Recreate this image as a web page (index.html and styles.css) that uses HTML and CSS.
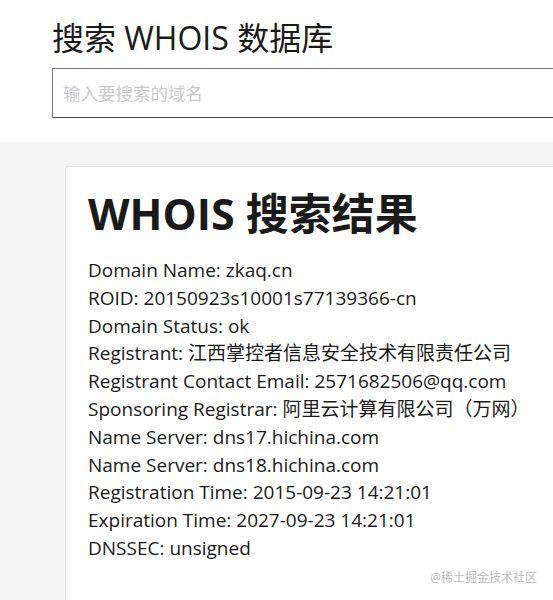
FILE: index.html
```html
<!DOCTYPE html>
<html lang="zh-CN">
<head>
  <meta charset="UTF-8">
  <meta name="viewport" content="width=device-width, initial-scale=1.0">
  <title>WHOIS</title>
  <link rel="stylesheet" href="styles.css">
</head>
<body>
  <div class="top">
    <h1 class="title">搜索 WHOIS 数据库</h1>
    <input class="search" type="text" placeholder="输入要搜索的域名">
  </div>
  <div class="main">
    <div class="card">
      <h2 class="cardTitle">WHOIS 搜索结果</h2>
      <div class="info">
        <div class="row">Domain Name: zkaq.cn</div>
        <div class="row">ROID: 20150923s10001s77139366-cn</div>
        <div class="row">Domain Status: ok</div>
        <div class="row">Registrant: 江西掌控者信息安全技术有限责任公司</div>
        <div class="row">Registrant Contact Email: 2571682506@qq.com</div>
        <div class="row">Sponsoring Registrar: 阿里云计算有限公司（万网）</div>
        <div class="row">Name Server: dns17.hichina.com</div>
        <div class="row">Name Server: dns18.hichina.com</div>
        <div class="row">Registration Time: 2015-09-23 14:21:01</div>
        <div class="row">Expiration Time: 2027-09-23 14:21:01</div>
        <div class="row">DNSSEC: unsigned</div>
      </div>
    </div>
  </div>
  <div class="mark">@稀土掘金技术社区</div>
</body>
</html>
```

FILE: styles.css
```css
html, body{
  margin: 0;
  height: 100%;
  overflow: hidden;
}
body{
  font-family: "Open Sans", "Noto Sans CJK SC", sans-serif;
  color: #1a1a1a;
  background: #f5f5f5;
}
.top{
  background: #fff;
  padding: 19px 0 24px 52px;
}
.title{
  margin: 0 0 11px;
  font-size: 32px;
  line-height: 38px;
  font-weight: 400;
}
.search{
  display: block;
  box-sizing: border-box;
  width: 560px;
  height: 50px;
  padding: 0 10px;
  border: 1px solid #7a7a7a;
  border-bottom-color: #444;
  border-right: none;
  border-radius: 0;
  font-family: "Open Sans", "Noto Sans CJK SC", sans-serif;
  font-size: 17.5px;
  outline: none;
}
.search::placeholder{
  color: #cbcbcb;
}
.main{
  padding: 24px 0 0 65px;
}
.card{
  background: #fff;
  border: 1px solid #e6e6e6;
  border-right: none;
  border-radius: 4px 0 0 0;
  padding: 22px 0 40px 22px;
  height: 500px;
}
.cardTitle{
  margin: 0 0 18px;
  font-size: 43px;
  line-height: 50px;
  font-weight: 700;
}
.info{
  font-size: 19px;
  line-height: 27.8px;
}
.mark{
  position: absolute;
  right: 16px;
  bottom: 14px;
  font-size: 12px;
  color: #bdbdbd;
}
```
